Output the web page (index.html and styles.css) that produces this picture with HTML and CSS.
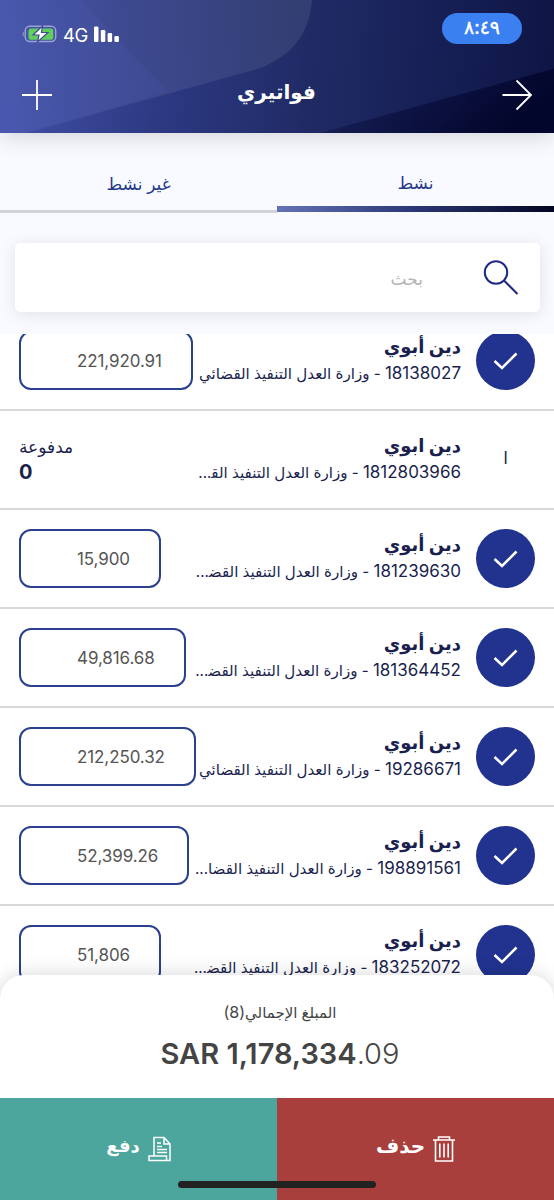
FILE: index.html
```
<!DOCTYPE html>
<html lang="ar" dir="rtl">
<head>
    <meta charset="utf-8">
    <meta name="viewport" content="width=device-width, initial-scale=1">
    <title>فواتيري</title>
    <link rel="stylesheet" href="styles.css">
</head>
<body>

<div class="app">
    <header class="header">
        <svg class="header-bg" viewBox="0 0 554 132" preserveAspectRatio="none">
            <defs>
                <linearGradient id="base" gradientUnits="userSpaceOnUse" x1="0" y1="60" x2="554" y2="110">
                    <stop offset="0" stop-color="#4452a8"/>
                    <stop offset="0.25" stop-color="#2f3c87"/>
                    <stop offset="0.55" stop-color="#202b66"/>
                    <stop offset="1" stop-color="#0e1545"/>
                </linearGradient>
                <linearGradient id="curve" gradientUnits="userSpaceOnUse" x1="0" y1="60" x2="315" y2="40">
                    <stop offset="0" stop-color="#4856ab"/>
                    <stop offset="0.4" stop-color="#3d4a90"/>
                    <stop offset="1" stop-color="#323d70"/>
                </linearGradient>
                <linearGradient id="corner" x1="0" y1="0" x2="1" y2="0.3">
                    <stop offset="0" stop-color="#0a1040" stop-opacity="0.15"/>
                    <stop offset="1" stop-color="#03062c"/>
                </linearGradient>
            </defs>
            <rect width="554" height="132" fill="url(#base)"/>
            <path d="M0 0H312C310 30 294 52 270 63Q262 68 252 70L26 132H0Z" fill="url(#curve)"/>
            <path d="M0 0H80L168 91L26 132H0Z" fill="#5566c4" opacity="0.14"/>
            <path d="M554 68L320 132H554Z" fill="url(#corner)"/>
        </svg>
        <div class="status">
            <span class="time">٨:٤٩</span>
            <div class="status-left">
                <svg width="37" height="18" viewBox="0 0 37 18">
                    <path d="M2.5 6.2Q0.5 9 2.5 11.8Z" fill="#a2aad3"/>
                    <rect x="4.2" y="1.2" width="30.5" height="15.3" rx="4.5" fill="none" stroke="#9aa3cf" stroke-width="1.4"/>
                    <rect x="7.5" y="3.4" width="24.8" height="11.4" rx="2.5" fill="#62cf5c"/>
                    <path d="M21.5 1L12 10H18L16.5 17L27 7.5H20.5Z" fill="#fff" stroke="#3f4c98" stroke-width="1.2"/>
                </svg>
                <span class="net">4G</span>
                <svg width="26" height="17" viewBox="0 0 26 17" fill="#fff">
                    <rect x="0" y="0.5" width="4.5" height="15.5" rx="1.2"/>
                    <rect x="6.8" y="4" width="4.5" height="12" rx="1.2"/>
                    <rect x="13.6" y="7" width="4.5" height="9" rx="1.2"/>
                    <rect x="20.4" y="10" width="4.5" height="6" rx="1.2"/>
                </svg>
            </div>
        </div>
        <div class="nav">
            <svg width="32" height="32" viewBox="0 0 32 32" fill="none" stroke="#fff" stroke-width="1.8">
                <path d="M1.5 16H30M15.5 1.5L30 16L15.5 30.5"/>
            </svg>
            <h1>فواتيري</h1>
            <svg width="30" height="30" viewBox="0 0 30 30" fill="none" stroke="#fff" stroke-width="1.8">
                <path d="M0 15H30M15 0V30"/>
            </svg>
        </div>
    </header>

    <nav class="tabs">
        <div class="tab active">نشط</div>
        <div class="tab">غير نشط</div>
    </nav>

    <div class="search">
        <svg width="36" height="36" viewBox="0 0 36 36" fill="none" stroke="#1d2a80" stroke-width="2">
            <circle cx="13" cy="12.5" r="11.2"/>
            <path d="M21 20.5L34.5 34"/>
        </svg>
        <span class="placeholder">بحث</span>
    </div>

    <main class="list">
        <div class="bill">
            <div class="check"><svg viewBox="0 0 24 18"><path d="M1 9L8.5 16L23 1.5"/></svg></div>
            <div class="info">
                <h2>دين أبوي</h2>
                <p><span class="num">18138027</span> - وزارة العدل التنفيذ القضائي</p>
            </div>
            <div class="amount">221,920.91</div>
        </div>
        <div class="bill">
            <div class="initial">ا</div>
            <div class="info">
                <h2>دين ابوي</h2>
                <p><span class="num">1812803966</span> - وزارة العدل التنفيذ الق&zwj;...</p>
            </div>
            <div class="paid">
                <span>مدفوعة</span>
                <b>0</b>
            </div>
        </div>
        <div class="bill">
            <div class="check"><svg viewBox="0 0 24 18"><path d="M1 9L8.5 16L23 1.5"/></svg></div>
            <div class="info">
                <h2>دين أبوي</h2>
                <p><span class="num">181239630</span> - وزارة العدل التنفيذ القض&zwj;...</p>
            </div>
            <div class="amount">15,900</div>
        </div>
        <div class="bill">
            <div class="check"><svg viewBox="0 0 24 18"><path d="M1 9L8.5 16L23 1.5"/></svg></div>
            <div class="info">
                <h2>دين أبوي</h2>
                <p><span class="num">181364452</span> - وزارة العدل التنفيذ القض&zwj;...</p>
            </div>
            <div class="amount">49,816.68</div>
        </div>
        <div class="bill">
            <div class="check"><svg viewBox="0 0 24 18"><path d="M1 9L8.5 16L23 1.5"/></svg></div>
            <div class="info">
                <h2>دين أبوي</h2>
                <p><span class="num">19286671</span> - وزارة العدل التنفيذ القضائي</p>
            </div>
            <div class="amount">212,250.32</div>
        </div>
        <div class="bill">
            <div class="check"><svg viewBox="0 0 24 18"><path d="M1 9L8.5 16L23 1.5"/></svg></div>
            <div class="info">
                <h2>دين أبوي</h2>
                <p><span class="num">198891561</span> - وزارة العدل التنفيذ القضا...</p>
            </div>
            <div class="amount">52,399.26</div>
        </div>
        <div class="bill">
            <div class="check"><svg viewBox="0 0 24 18"><path d="M1 9L8.5 16L23 1.5"/></svg></div>
            <div class="info">
                <h2>دين أبوي</h2>
                <p><span class="num">183252072</span> - وزارة العدل التنفيذ القض&zwj;...</p>
            </div>
            <div class="amount">51,806</div>
        </div>
    </main>

    <section class="total">
        <div class="total-label">المبلغ الإجمالي<span class="num">(8)</span></div>
        <div class="total-value" dir="ltr"><b>SAR 1,178,334</b>.09</div>
    </section>

    <footer class="actions">
        <div class="action delete">
            <svg width="22" height="26" viewBox="0 0 22 26" fill="none" stroke="#fff" stroke-width="1.6">
                <path d="M0 4H22M5.5 4V1H16.5V4M2.5 4V25H19.5V4M6.8 7.5V21.5M11 7.5V21.5M15.2 7.5V21.5"/>
            </svg>
            <span>حذف</span>
        </div>
        <div class="action pay">
            <svg width="23" height="26" viewBox="0 0 23 26" fill="none" stroke="#fff" stroke-width="1.5">
                <path d="M6 19.5V1.5H16L22 8V24.5H1V20H18.5V24.5M16 1.5V8H22M9 7H13M9 10.5H14M9 13.5H19M9 16.5H19"/>
            </svg>
            <span>دفع</span>
        </div>
        <div class="home-bar"></div>
    </footer>
</div>

</body>
</html>
```
FILE: styles.css
```
* {
    box-sizing: border-box;
}

body {
    margin: 0;
    font-family: 'Inter', 'DejaVu Sans', sans-serif;
    background-color: #f9faff;
    color: #1a1f4e;
}

h1, h2, p {
    margin: 0;
}

svg {
    display: block;
    flex: none;
}

.app {
    display: flex;
    flex-direction: column;
    width: 554px;
    height: 1200px;
    overflow: hidden;
}

/* Header */
.header {
    position: relative;
    flex: none;
    height: 133px;
    color: white;
    box-shadow: 0 4px 22px rgba(0, 0, 0, 0.15);
}

.header-bg {
    position: absolute;
    inset: 0;
    width: 100%;
    height: 100%;
}

.status, .nav {
    position: relative;
    display: flex;
    align-items: center;
    justify-content: space-between;
}

.status {
    height: 31px;
    margin-top: 13px;
    padding: 0 32px 0 21px;
}

/* Keeps the margin above inside the header */
.header {
    display: flow-root;
}

.time {
    width: 80px;
    height: 31px;
    border-radius: 16px;
    background-color: #3b80f1;
    font-size: 19px;
    line-height: 29px;
    text-align: center;
    -webkit-text-stroke: 0.4px white;
}

.status-left {
    display: flex;
    direction: ltr;
    align-items: center;
    padding-top: 11px;
}

.net {
    margin: 1px 6px 0 5px;
    font-size: 18.5px;
    line-height: 20px;
    letter-spacing: -0.4px;
}

.nav {
    height: 40px;
    margin-top: 30px;
    padding: 1px 21px 0 22px;
}

.nav h1 {
    font-size: 20px;
    line-height: 30px;
    margin-top: -5px;
}

/* Tabs */
.tabs {
    display: flex;
    flex: none;
    height: 80px;
}

.tab {
    flex: 1;
    border-bottom: 3px solid #d2d3d6;
    padding-top: 37px;
    font-size: 17px;
    line-height: 28px;
    text-align: center;
    color: #25388a;
}

.tab.active {
    height: 79px;
    padding-top: 36px;
    border-bottom: 6px solid;
    border-image: linear-gradient(to right, #6573b6, #2a3675 50%, #02061f) 1;
}

/* Search box */
.search {
    display: flex;
    flex: none;
    align-items: center;
    height: 69px;
    margin: 30px 14px 22px 15px;
    padding: 0 21px;
    border-radius: 5px;
    background-color: white;
    box-shadow: 0 2px 16px rgba(0, 0, 0, 0.1);
}

.placeholder {
    margin: 2px 60px 0 0;
    font-size: 17px;
    color: #b5b5b5;
}

/* Bills list */
.list {
    flex: 1;
    min-height: 0;
    overflow: hidden;
    background-color: white;
}

.bill {
    display: flex;
    align-items: center;
    height: 99px;
    padding: 0 19px;
    border-bottom: 2px solid #d9d9db;
}

/* First bill is scrolled partly under the search box */
.bill:first-child {
    margin-top: -22px;
}

.check, .initial {
    flex: none;
    width: 59px;
    height: 59px;
    border-radius: 50%;
}

.check {
    display: flex;
    align-items: center;
    justify-content: center;
    background-color: #21338f;
}

.check svg {
    width: 25px;
    height: 18px;
    fill: none;
    stroke: white;
    stroke-width: 2.5;
}

.initial {
    font-size: 17px;
    line-height: 57px;
    text-align: center;
}

.info {
    flex: 1;
    min-width: 0;
    margin: -1px 15px 0 0;
    white-space: nowrap;
}

.info h2 {
    font-size: 18px;
    line-height: 27px;
}

.info p {
    font-size: 15.1px;
    line-height: 26px;
}

.num {
    font-size: 17px;
}

.info .num {
    letter-spacing: -0.2px;
}

.amount {
    flex: none;
    height: 59px;
    padding: 1px 29px 0 56px;
    border: 2px solid #2b418f;
    border-radius: 12px;
    direction: ltr;
    font-size: 17px;
    line-height: 55px;
    letter-spacing: -0.1px;
    color: #555;
}

.paid {
    display: flex;
    flex-direction: column;
    align-items: flex-end;
    font-size: 17px;
    line-height: 25px;
}

.paid b {
    font-size: 20px;
}

/* Total sheet */
.total {
    position: relative;
    flex: none;
    height: 123px;
    border-radius: 24px 24px 0 0;
    margin-top: -24px;
    padding: 23px 0 0 6px;
    background-color: white;
    box-shadow: 0 0 20px rgba(0, 0, 0, 0.16);
    text-align: center;
    color: #444;
}

.total-label {
    font-size: 15px;
    line-height: 28px;
}

.total-label .num {
    font-size: 16px;
}

.total-value {
    font-size: 29px;
    font-weight: 300;
    line-height: 54px;
}

.total-value b {
    font-weight: 600;
}

/* Bottom actions */
.actions {
    position: relative;
    display: flex;
    flex: none;
    height: 102px;
}

.action {
    display: flex;
    flex: 1;
    align-items: center;
    justify-content: center;
    gap: 8px;
    font-size: 20px;
    font-weight: bold;
    line-height: 30px;
    color: white;
}

.action span {
    margin-top: -6px;
}

.delete {
    background-color: #a83f3c;
}

.pay {
    font-size: 18px;
    background-color: #4ca69d;
}

.home-bar {
    position: absolute;
    left: 178px;
    bottom: 12px;
    width: 198px;
    height: 7px;
    border-radius: 4px;
    background-color: #222;
}
```
